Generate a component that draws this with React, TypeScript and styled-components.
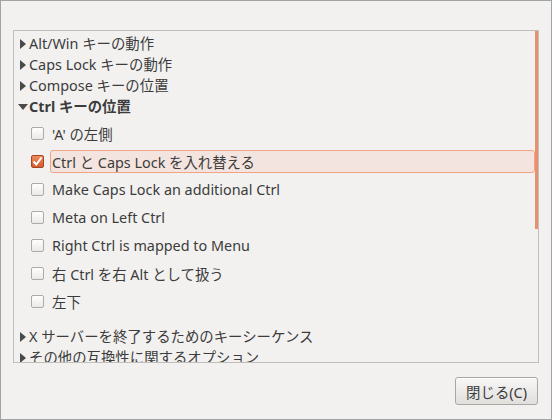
import React from "react";
import styled, { createGlobalStyle } from "styled-components";

const Global = createGlobalStyle`
  html, body { margin: 0; padding: 0; background: #f2f1f0; }
  body { font-family: "Noto Sans", "Noto Sans CJK JP", sans-serif; color: #3c3c3c; }
`;

const Window = styled.div`
  width: 552px;
  height: 420px;
  box-sizing: border-box;
  border: 1px solid #a3a3a3;
  background: #f2f1f0;
  padding: 29px 12px 0 12px;
  display: flex;
  flex-direction: column;
  font-size: 14.4px;
  overflow: hidden;
`;

const Panel = styled.div`
  height: 333px;
  box-sizing: border-box;
  border: 1px solid #c2bfbb;
  display: flex;
  overflow: hidden;
`;

const List = styled.div`
  flex: 1;
  padding-top: 2px;
  overflow: hidden;
`;

const ScrollTrack = styled.div`
  width: 3px;
  flex: none;
`;

const ScrollThumb = styled.div`
  height: 198px;
  background: #e6926f;
`;

const ExpRow = styled.div<{ $gap?: number }>`
  height: 21px;
  display: flex;
  align-items: center;
  padding-left: 4px;
  margin-top: ${(p) => p.$gap ?? 0}px;
  white-space: nowrap;
`;

const Arrow = styled.span`
  width: 11px;
  height: 10px;
  flex: none;
  display: flex;
  align-items: center;
  justify-content: flex-start;
`;

const ExpLabel = styled.span<{ $bold?: boolean }>`
  font-weight: ${(p) => (p.$bold ? 700 : 400)};
  line-height: 21px;
`;

const Children = styled.div`
  padding-top: 2px;
`;

const CheckRow = styled.div`
  height: 28px;
  display: flex;
  align-items: center;
  padding-left: 17px;
`;

const Box = styled.span<{ $on?: boolean }>`
  width: 13px;
  height: 13px;
  box-sizing: border-box;
  flex: none;
  border-radius: 2px;
  border: 1px solid ${(p) => (p.$on ? "#a4461f" : "#aeaba6")};
  background: ${(p) =>
    p.$on
      ? "linear-gradient(#f08a5d, #d65a2c)"
      : "linear-gradient(#fdfdfc, #eceae8)"};
  display: flex;
  align-items: center;
  justify-content: center;
  margin-right: 6px;
`;

const Label = styled.span<{ $sel?: boolean }>`
  flex: 1;
  height: 23px;
  box-sizing: border-box;
  display: flex;
  align-items: center;
  padding-left: 1px;
  border-radius: 3px;
  border: 1px solid ${(p) => (p.$sel ? "#f1a383" : "transparent")};
  background: ${(p) => (p.$sel ? "#f3e4df" : "transparent")};
  white-space: nowrap;
`;

const Footer = styled.div`
  display: flex;
  justify-content: flex-end;
  padding: 14px 1px 0 0;
`;

const Button = styled.button`
  height: 28px;
  padding: 0 10px;
  font: inherit;
  font-size: 14.4px;
  color: #3c3c3c;
  border: 1px solid #a9a7a4;
  border-radius: 3px;
  background: linear-gradient(#f8f7f6, #e1dfdc);
  box-shadow: inset 0 1px 0 #fff;
`;

const RightArrow = () => (
  <svg width="7" height="10" viewBox="0 0 7 10" style={{ marginLeft: 2 }}>
    <path d="M0 0 L6 5 L0 10 Z" fill="#4a4a4a" />
  </svg>
);

const DownArrow = () => (
  <svg width="10" height="6" viewBox="0 0 10 6">
    <path d="M0 0 L10 0 L5 6 Z" fill="#4a4a4a" />
  </svg>
);

const Check = () => (
  <svg width="11" height="11" viewBox="0 0 11 11">
    <path d="M1.5 5.5 L4.3 8.5 L9.5 1.5" fill="none" stroke="#fff" strokeWidth="2" />
  </svg>
);

const options = [
  { t: "'A' の左側" },
  { t: "Ctrl と Caps Lock を入れ替える", on: true },
  { t: "Make Caps Lock an additional Ctrl" },
  { t: "Meta on Left Ctrl" },
  { t: "Right Ctrl is mapped to Menu" },
  { t: "右 Ctrl を右 Alt として扱う" },
  { t: "左下" },
];

export default function App() {
  return (
    <>
      <Global />
      <Window>
        <Panel>
          <List>
            <ExpRow>
              <Arrow><RightArrow /></Arrow>
              <ExpLabel>Alt/Win キーの動作</ExpLabel>
            </ExpRow>
            <ExpRow>
              <Arrow><RightArrow /></Arrow>
              <ExpLabel>Caps Lock キーの動作</ExpLabel>
            </ExpRow>
            <ExpRow>
              <Arrow><RightArrow /></Arrow>
              <ExpLabel>Compose キーの位置</ExpLabel>
            </ExpRow>
            <ExpRow>
              <Arrow><DownArrow /></Arrow>
              <ExpLabel $bold>Ctrl キーの位置</ExpLabel>
            </ExpRow>
            <Children>
              {options.map((o) => (
                <CheckRow key={o.t}>
                  <Box $on={o.on}>{o.on && <Check />}</Box>
                  <Label $sel={o.on}>{o.t}</Label>
                </CheckRow>
              ))}
            </Children>
            <ExpRow $gap={11}>
              <Arrow><RightArrow /></Arrow>
              <ExpLabel>X サーバーを終了するためのキーシーケンス</ExpLabel>
            </ExpRow>
            <ExpRow>
              <Arrow><RightArrow /></Arrow>
              <ExpLabel>その他の互換性に関するオプション</ExpLabel>
            </ExpRow>
          </List>
          <ScrollTrack>
            <ScrollThumb />
          </ScrollTrack>
        </Panel>
        <Footer>
          <Button>閉じる(C)</Button>
        </Footer>
      </Window>
    </>
  );
}
